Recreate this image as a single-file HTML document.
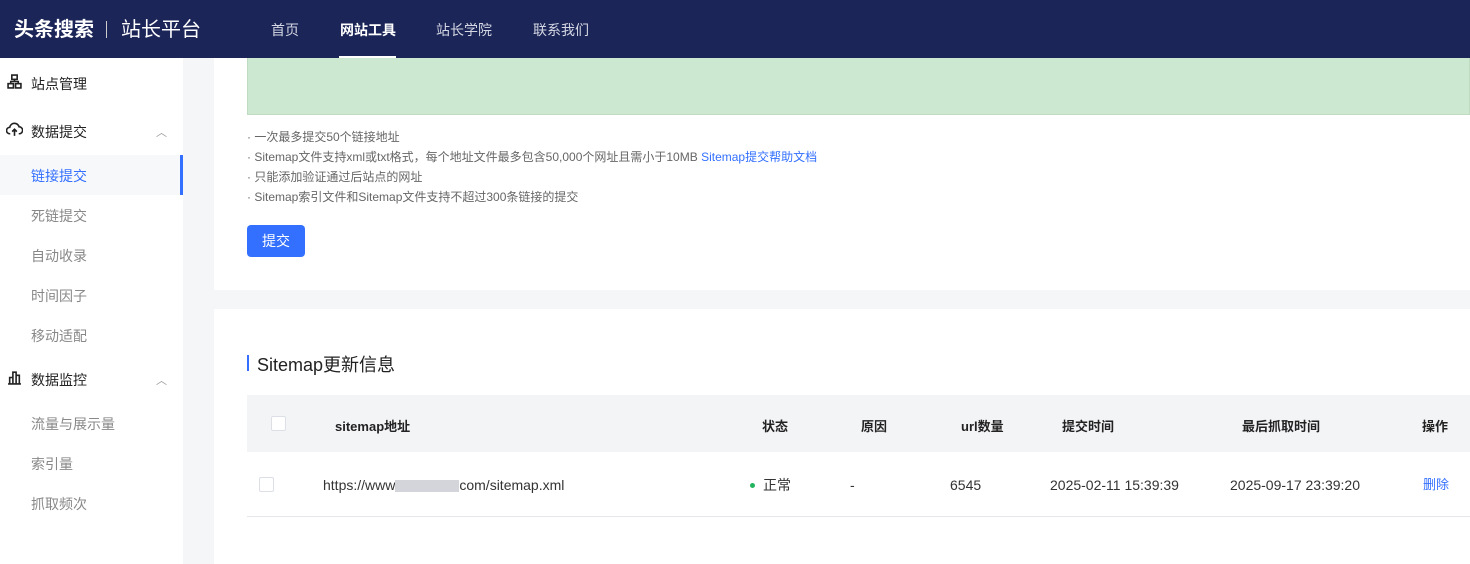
<!DOCTYPE html><html><head><meta charset="utf-8"><style>
*{margin:0;padding:0;box-sizing:border-box}
body{width:1470px;height:564px;overflow:hidden;background:#f5f6f8;font-family:"Liberation Sans","Noto Sans CJK SC",sans-serif;position:relative;color:#333}
.hd{position:absolute;left:0;top:0;width:1470px;height:58px;background:#1b2557;color:#fff}
.logo{position:absolute;left:14px;top:16px;font-size:20px;font-weight:bold;line-height:28px}
.logo2{position:absolute;left:121px;top:16px;font-size:20px;line-height:28px}
.sep{position:absolute;left:106px;top:21px;width:1px;height:17px;background:#ccc}
.nav{position:absolute;top:20px;font-size:14px;color:#d5d8e4}
.ul{position:absolute;left:339px;top:56px;width:57px;height:2px;background:#fff}
.sb{position:absolute;left:0;top:58px;width:183px;height:506px;background:#fff}
.it{position:absolute;left:31px;font-size:14px;color:#888}
.gp{font-size:14px;color:#222;position:absolute;left:31px}
.car{position:absolute;left:156px;font-size:11px;color:#999}
.card{position:absolute;left:214px;background:#fff;width:1256px}
.tip{position:absolute;left:247px;font-size:12px;color:#666}
.th{position:absolute;top:416px;font-size:13px;font-weight:bold;color:#222}
.td{position:absolute;top:476px;font-size:14px;color:#333;line-height:18px}
.cb{position:absolute;width:15px;height:15px;border:1px solid #dcdfe6;background:#fff;border-radius:2px}
</style></head><body>
<div class="hd">
<div class="logo">头条搜索</div><div class="sep"></div><div class="logo2">站长平台</div>
<div class="nav" style="left:271px">首页</div>
<div class="nav" style="left:340px;color:#fff;font-weight:bold">网站工具</div>
<div class="nav" style="left:436px">站长学院</div>
<div class="nav" style="left:533px">联系我们</div>
<div class="ul"></div>
</div>
<div class="sb">
<svg style="position:absolute;left:7px;top:16px" width="15" height="15" viewBox="0 0 14 14" fill="none" stroke="#222" stroke-width="1.5"><rect x="4.5" y="1" width="5" height="4"/><rect x="1" y="9" width="5" height="4"/><rect x="8" y="9" width="5" height="4"/><path d="M7 5v2M3.5 9V7h7v2"/></svg>
<div class="gp" style="top:16px">站点管理</div>
<svg style="position:absolute;left:6px;top:64px" width="17" height="15" viewBox="0 0 16 14" fill="none" stroke="#222" stroke-width="1.5"><path d="M4 11H3.5a3 3 0 0 1 0-6 4.5 4.5 0 0 1 8.8-.5A3 3 0 0 1 12.5 11H12M8 13V7M5.8 9L8 6.8 10.2 9"/></svg>
<div class="gp" style="top:64px">数据提交</div><div class="car" style="top:66px">︿</div>
<div style="position:absolute;left:0;top:97px;width:183px;height:40px;background:#f7f8fa"></div>
<div style="position:absolute;left:180px;top:97px;width:3px;height:40px;background:#3370ff"></div>
<div class="it" style="top:108px;color:#3370ff">链接提交</div>
<div class="it" style="top:148px">死链提交</div>
<div class="it" style="top:188px">自动收录</div>
<div class="it" style="top:228px">时间因子</div>
<div class="it" style="top:268px">移动适配</div>
<svg style="position:absolute;left:7px;top:312px" width="15" height="15" viewBox="0 0 14 14" fill="none" stroke="#222" stroke-width="1.5"><path d="M1 13h12M2.5 13V7h3v6M5.5 13V2h3v11M8.5 13V5h3v8"/></svg>
<div class="gp" style="top:312px">数据监控</div><div class="car" style="top:314px">︿</div>
<div class="it" style="top:356px">流量与展示量</div>
<div class="it" style="top:396px">索引量</div>
<div class="it" style="top:436px">抓取频次</div>
</div>
<div class="card" style="top:58px;height:232px"></div>
<div style="position:absolute;left:247px;top:58px;width:1223px;height:57px;background:#cde8d0;border:1px solid #bfdcc3;border-top:none"></div>
<div class="tip" style="top:128px">· 一次最多提交50个链接地址</div>
<div class="tip" style="top:148px">· Sitemap文件支持xml或txt格式，每个地址文件最多包含50,000个网址且需小于10MB <span style="color:#3370ff">Sitemap提交帮助文档</span></div>
<div class="tip" style="top:168px">· 只能添加验证通过后站点的网址</div>
<div class="tip" style="top:188px">· Sitemap索引文件和Sitemap文件支持不超过300条链接的提交</div>
<div style="position:absolute;left:247px;top:225px;width:58px;height:32px;background:#3370ff;border-radius:4px;color:#fff;font-size:14px;text-align:center;line-height:32px">提交</div>
<div class="card" style="top:309px;height:255px"></div>
<div style="position:absolute;left:247px;top:355px;width:2px;height:16px;background:#3370ff"></div>
<div style="position:absolute;left:257px;top:351px;font-size:18px;color:#222">Sitemap更新信息</div>
<div style="position:absolute;left:247px;top:395px;width:1223px;height:57px;background:#f3f4f6"></div>
<div style="position:absolute;left:247px;top:516px;width:1223px;height:1px;background:#e5e6eb"></div>
<div class="cb" style="left:271px;top:416px"></div>
<div class="cb" style="left:259px;top:477px"></div>
<div class="th" style="left:335px">sitemap地址</div>
<div class="th" style="left:762px">状态</div>
<div class="th" style="left:861px">原因</div>
<div class="th" style="left:961px">url数量</div>
<div class="th" style="left:1062px">提交时间</div>
<div class="th" style="left:1242px">最后抓取时间</div>
<div class="th" style="left:1422px">操作</div>
<div class="td" style="left:323px">https://www<span style="display:inline-block;width:64px;height:12px;background:#d3d5da;vertical-align:middle"></span>com/sitemap.xml</div>
<div style="position:absolute;left:750px;top:483px;width:5px;height:5px;border-radius:50%;background:#22b35e"></div>
<div class="td" style="left:763px">正常</div>
<div class="td" style="left:850px">-</div>
<div class="td" style="left:950px">6545</div>
<div class="td" style="left:1050px">2025-02-11 15:39:39</div>
<div class="td" style="left:1230px">2025-09-17 23:39:20</div>
<div class="td" style="left:1423px;color:#3370ff;font-size:13px">删除</div>
</body></html>
